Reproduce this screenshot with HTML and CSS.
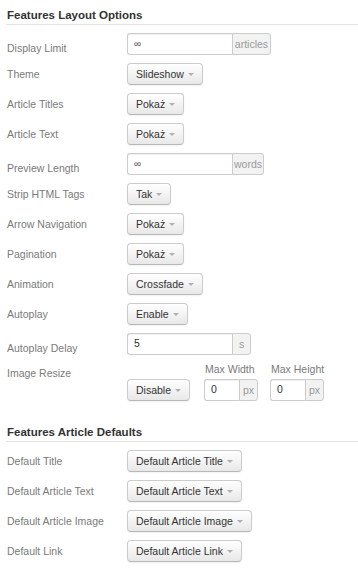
FILE: index.html
```html
<!DOCTYPE html>
<html>
<head>
<meta charset="utf-8">
<link rel="stylesheet" href="styles.css">
</head>
<body>
<div class="panel">
  <h3 class="legend">Features Layout Options</h3>

  <div class="row input-row">
    <div class="label">Display Limit</div>
    <div class="ctrl"><div class="group"><span class="field">∞</span><span class="addon addon-articles">articles</span></div></div>
  </div>
  <div class="row">
    <div class="label">Theme</div>
    <div class="ctrl"><span class="btn">Slideshow<i class="caret"></i></span></div>
  </div>
  <div class="row">
    <div class="label">Article Titles</div>
    <div class="ctrl"><span class="btn">Pokaż<i class="caret"></i></span></div>
  </div>
  <div class="row">
    <div class="label">Article Text</div>
    <div class="ctrl"><span class="btn">Pokaż<i class="caret"></i></span></div>
  </div>
  <div class="row input-row">
    <div class="label">Preview Length</div>
    <div class="ctrl"><div class="group"><span class="field">∞</span><span class="addon addon-words">words</span></div></div>
  </div>
  <div class="row">
    <div class="label">Strip HTML Tags</div>
    <div class="ctrl"><span class="btn">Tak<i class="caret"></i></span></div>
  </div>
  <div class="row">
    <div class="label">Arrow Navigation</div>
    <div class="ctrl"><span class="btn">Pokaż<i class="caret"></i></span></div>
  </div>
  <div class="row">
    <div class="label">Pagination</div>
    <div class="ctrl"><span class="btn">Pokaż<i class="caret"></i></span></div>
  </div>
  <div class="row">
    <div class="label">Animation</div>
    <div class="ctrl"><span class="btn">Crossfade<i class="caret"></i></span></div>
  </div>
  <div class="row">
    <div class="label">Autoplay</div>
    <div class="ctrl"><span class="btn">Enable<i class="caret"></i></span></div>
  </div>
  <div class="row input-row">
    <div class="label">Autoplay Delay</div>
    <div class="ctrl"><div class="group"><span class="field value">5</span><span class="addon addon-small">s</span></div></div>
  </div>
  <div class="row resize-row">
    <div class="label">Image Resize</div>
    <div class="ctrl resize">
      <span class="btn">Disable<i class="caret"></i></span>
      <div class="sub sub-width">
        <div class="sublabel">Max Width</div>
        <div class="group"><span class="field value small">0</span><span class="addon addon-small">px</span></div>
      </div>
      <div class="sub">
        <div class="sublabel">Max Height</div>
        <div class="group"><span class="field value small">0</span><span class="addon addon-small">px</span></div>
      </div>
    </div>
  </div>

  <h3 class="legend legend-second">Features Article Defaults</h3>

  <div class="row">
    <div class="label">Default Title</div>
    <div class="ctrl"><span class="btn">Default Article Title<i class="caret"></i></span></div>
  </div>
  <div class="row">
    <div class="label">Default Article Text</div>
    <div class="ctrl"><span class="btn">Default Article Text<i class="caret"></i></span></div>
  </div>
  <div class="row">
    <div class="label">Default Article Image</div>
    <div class="ctrl"><span class="btn">Default Article Image<i class="caret"></i></span></div>
  </div>
  <div class="row">
    <div class="label">Default Link</div>
    <div class="ctrl"><span class="btn">Default Article Link<i class="caret"></i></span></div>
  </div>
</div>
</body>
</html>
```

FILE: styles.css
```css
* { box-sizing: border-box; }
html, body { margin: 0; padding: 0; background: #fff; }
body {
  font-family: "Liberation Sans", Arial, sans-serif;
  font-size: 10.5px;
  color: #333;
}
.panel {
  padding: 8px 0 0 6px;
  display: flex;
  flex-direction: column;
}
.legend {
  margin: 0 0 8px 0;
  padding: 0 0 1px 1px;
  font-size: 11.5px;
  line-height: 15px;
  font-weight: bold;
  color: #333;
  border-bottom: 1px solid #e3e3e3;
}
.legend-second { margin-top: 24px; }
.row {
  display: grid;
  grid-template-columns: 121px auto;
  margin-bottom: 8px;
}
.label {
  color: #7a7a7a;
  line-height: 13px;
  padding: 5px 0 0 1px;
}
.input-row .label { padding-top: 9px; }
.resize-row { margin-bottom: 0; }
.resize-row .label { padding-top: 4px; }
.ctrl { display: flex; align-items: flex-start; }
.btn {
  display: inline-flex;
  align-items: center;
  height: 22px;
  padding: 0 8px 0 8px;
  border: 1px solid #cccccc;
  border-bottom-color: #b8b8b8;
  border-radius: 4px;
  background: linear-gradient(#ffffff, #e8e8e8);
  box-shadow: 0 1px 2px rgba(0,0,0,.06);
  color: #333;
  white-space: nowrap;
}
.caret {
  display: inline-block;
  width: 0;
  height: 0;
  margin-left: 4px;
  margin-top: 1px;
  border-top: 3px solid #b0b0b0;
  border-left: 3px solid transparent;
  border-right: 3px solid transparent;
}
.group { display: flex; height: 22px; }
.field {
  width: 105px;
  height: 22px;
  border: 1px solid #cccccc;
  border-right: 0;
  border-radius: 3px 0 0 3px;
  background: #fff;
  box-shadow: inset 0 1px 1px rgba(0,0,0,.06);
  padding: 0 6px;
  line-height: 19px;
  color: #555;
  font-size: 10px;
}
.field.value { font-size: 10.5px; color: #333; line-height: 18px; }
.field.small { width: 35px; }
.addon {
  height: 22px;
  border: 1px solid #cccccc;
  border-radius: 0 3px 3px 0;
  background: #f2f2f2;
  color: #9a9a9a;
  line-height: 20px;
  text-align: center;
  padding: 0;
}
.addon-articles { width: 39px; }
.addon-words { width: 32px; }
.addon-small { width: 19px; }
.resize { padding-top: 16px; align-items: flex-end; }
.resize .btn { margin-right: 14px; }
.sub { display: flex; flex-direction: column; }
.sub-width { margin-right: 12px; }
.sublabel {
  color: #7a7a7a;
  line-height: 13px;
  margin-top: -16px;
  margin-bottom: 3px;
  padding-left: 1px;
}
```
